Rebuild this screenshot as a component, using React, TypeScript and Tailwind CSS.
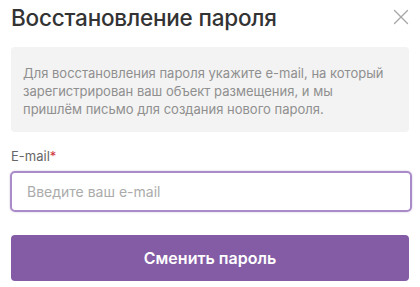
import { X } from "lucide-react";

export default function App() {
  return (
    <div className="h-[287px] w-[420px] bg-white px-[11px] font-['Inter',sans-serif]">
      {/* HEADER */}
      <div className="flex h-[34px] items-center justify-between pt-[2px]">
        <h1 className="text-[22.5px] font-medium leading-none tracking-[-0.2px] text-[#333333]">
          Восстановление пароля
        </h1>
        <button className="-mr-[5px] -mt-[3px] text-[#a8a8a8]">
          <X size={26} strokeWidth={1.25} />
        </button>
      </div>

      {/* INFO */}
      <div className="mt-[13px] flex h-[85px] items-center rounded-[4px] bg-[#f3f3f3] px-[12px] pt-[3px]">
        <p className="max-w-[362px] text-[13px] leading-[18px] text-[#8f8f8f]">
          Для восстановления пароля укажите e-mail, на который
          зарегистрирован ваш объект размещения, и мы пришлём письмо для
          создания нового пароля.
        </p>
      </div>

      {/* FORM */}
      <label className="mt-[16px] block text-[13px] leading-[16px] text-[#666666]">
        E-mail<span className="text-[#d0343a]">*</span>
      </label>
      <input
        autoFocus
        placeholder="Введите ваш e-mail"
        className="-ml-px mt-[7px] h-[41px] w-[402px] rounded-[5px] border-[2.5px] border-[#a98bc7] px-[15px] text-[14px] text-[#333] caret-black outline-none shadow-[0_0_2px_rgba(131,92,166,0.4)] placeholder:text-[#ababab]"
      />

      <button className="mt-[23px] flex h-[46px] w-full items-center justify-center rounded-[4px] bg-[#835ca5] text-[16px] font-semibold text-white">
        Сменить пароль
      </button>
    </div>
  );
}
